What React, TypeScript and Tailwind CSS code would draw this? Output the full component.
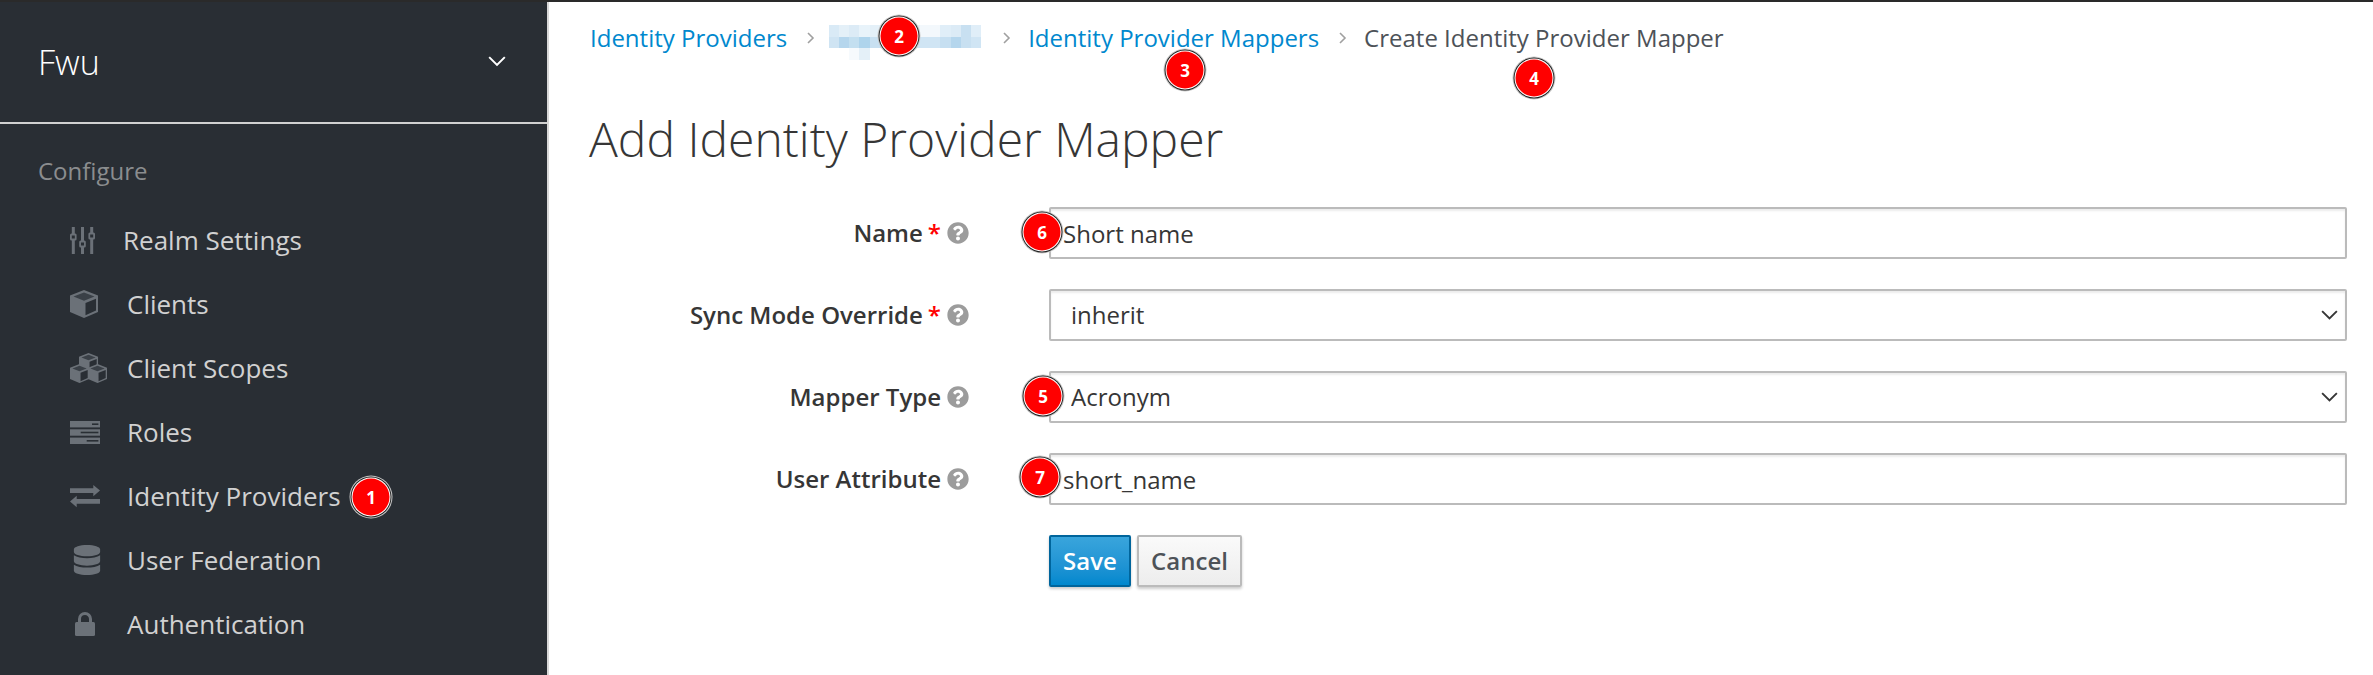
import React from "react";
import { FaDatabase, FaQuestionCircle } from "react-icons/fa";

const ICON = "#6b7178";
const BG = "#292e34";

const Sliders = () => (
  <svg width="25" height="27" viewBox="0 0 25 27" fill={ICON}>
    <rect x="1.800" y="0" width="3" height="27" />
    <rect x="11" y="0" width="3" height="27" />
    <rect x="20.200" y="0" width="3" height="27" />
    <rect x="0" y="6.500" width="6.600" height="7" rx="1.500" />
    <rect x="9.200" y="13.500" width="6.600" height="7" rx="1.500" />
    <rect x="18.400" y="5.500" width="6.600" height="7" rx="1.500" />
    <rect x="1.800" y="8.500" width="3" height="3" fill={BG} />
    <rect x="11" y="15.500" width="3" height="3" fill={BG} />
    <rect x="20.200" y="7.500" width="3" height="3" fill={BG} />
  </svg>
);

const CubeShape = () => (
  <>
    <path d="M14 0L28 5.500V22L14 28 0 22V5.500z" fill={ICON} />
    <path d="M14 2.500L24.500 6.500 14 10.800 3.500 6.500z" fill="#3a4047" />
    <path d="M15.500 13L26 8.700V20.500L15.500 25.300z" fill={BG} />
  </>
);

const Cube = () => (
  <svg width="28" height="28" viewBox="0 0 28 28">
    <CubeShape />
  </svg>
);

const Cubes = () => (
  <svg width="37" height="30" viewBox="0 0 37 30">
    <g transform="translate(9 0) scale(0.68)">
      <CubeShape />
    </g>
    <g transform="translate(0 11) scale(0.68)">
      <CubeShape />
    </g>
    <g transform="translate(18 11) scale(0.68)">
      <CubeShape />
    </g>
  </svg>
);

const Server = () => (
  <svg width="30" height="23" viewBox="0 0 30 23" fill={ICON}>
    <rect x="0" y="0" width="30" height="6.400" />
    <rect x="0" y="8.300" width="30" height="6.400" />
    <rect x="0" y="16.600" width="30" height="6.400" />
    <rect x="22" y="2.400" width="6.400" height="1.600" fill={BG} />
    <rect x="10.700" y="10.700" width="17.700" height="1.600" fill={BG} />
    <rect x="16.700" y="19" width="11.700" height="1.600" fill={BG} />
  </svg>
);

const Exchange = () => (
  <svg width="30" height="23" viewBox="0 0 30 23" fill={ICON}>
    <path d="M0 3.300H23.300V0L30 5.500 23.300 11.300V8H0z" />
    <path d="M30 14H6.700V10.700L0 16.400 6.700 22.300V18.700H30z" />
  </svg>
);

const Lock = () => (
  <svg width="20" height="24" viewBox="0 0 20 24">
    <path d="M4.500 11V7a5.500 5.500 0 0 1 11 0v4" fill="none" stroke={ICON} strokeWidth="3" />
    <rect x="0" y="10" width="20" height="14" rx="1.500" fill={ICON} />
  </svg>
);

const Chevron = ({ color, width }: { color: string; width: number }) => (
  <svg width={width} height={width * 0.62} viewBox="0 0 16 10" fill="none" stroke={color} strokeWidth="1.8">
    <path d="M1 1l7 7 7-7" />
  </svg>
);

const navItems = [
  { label: "Realm Settings", icon: <Sliders />, slot: "w-[53px]" },
  { label: "Clients", icon: <Cube />, slot: "w-[57px]" },
  { label: "Client Scopes", icon: <Cubes />, slot: "w-[57px]" },
  { label: "Roles", icon: <Server />, slot: "w-[57px]" },
  { label: "Identity Providers", icon: <Exchange />, slot: "w-[57px]" },
  { label: "User Federation", icon: <FaDatabase size={30} color={ICON} />, slot: "w-[57px] pl-[2px]" },
  { label: "Authentication", icon: <Lock />, slot: "w-[57px] pl-[5px]" },
];

const Badge = ({ n, pos }: { n: number; pos: string }) => (
  <div
    className={`absolute ${pos} flex h-[37px] w-[37px] -translate-x-1/2 -translate-y-1/2 items-center justify-center rounded-full bg-[#ff0000] text-[17px] font-bold text-white shadow-[0_0_0_1px_#ffffff,0_0_0_2px_#222222,0_0_0_3px_#c8c8c8]`}
  >
    {n}
  </div>
);

const Sep = () => (
  <svg width="8" height="12" viewBox="0 0 8 12" fill="none" stroke="#a0a0a0" strokeWidth="1.6" className="ml-[20px] mr-[17px] shrink-0">
    <path d="M1 1l5 5-5 5" />
  </svg>
);

const pixels: [number, number, string][] = [
  [0, 0, "#d9eaf6"], [1, 0, "#e4f0f8"], [2, 0, "#dcebf6"], [3, 0, "#e8f3fa"], [4, 0, "#e4f0f8"], [5, 0, "#dcebf6"], [6, 0, "#e8f2f9"], [7, 0, "#eef5fb"], [8, 0, "#e8f2f9"], [9, 0, "#f3f8fc"], [10, 0, "#f3f8fc"], [11, 0, "#e0eef8"], [12, 0, "#dcebf6"], [13, 0, "#c8e0f1"], [14, 0, "#e0eef8"],
  [0, 1, "#cfe4f3"], [1, 1, "#b5d6ed"], [2, 1, "#c3dff0"], [3, 1, "#aed4ec"], [4, 1, "#c8e0f1"], [5, 1, "#bddbef"], [6, 1, "#cfe4f3"], [7, 1, "#d5e8f5"], [8, 1, "#cfe4f3"], [9, 1, "#d0e5f4"], [10, 1, "#d0e5f4"], [11, 1, "#c6dff1"], [12, 1, "#b5d6ed"], [13, 1, "#c8e0f1"], [14, 1, "#d0e5f4"],
  [2, 2, "#f6fafd"], [3, 2, "#e4f0f8"],
];

const Blur = () => (
  <svg width="152" height="35" viewBox="0 0 15 3" preserveAspectRatio="none" shapeRendering="crispEdges" className="-ml-[3px] mr-[2px] mt-[8px] shrink-0 self-center">
    {pixels.map(([x, y, c], i) => (
      <rect key={i} x={x} y={y} width="1" height="1" fill={c} />
    ))}
  </svg>
);

const fieldClass =
  "h-[52px] w-full rounded-[2px] border-2 border-[#bbbbbb] bg-white text-[24px] text-[#363636] shadow-[inset_0_2px_2px_rgba(3,3,3,0.08)] outline-none";

const fields = [
  { text: "Name", required: true, value: "Short name", type: "input" },
  { text: "Sync Mode Override", required: true, value: "inherit", type: "select" },
  { text: "Mapper Type", required: false, value: "Acronym", type: "select" },
  { text: "User Attribute", required: false, value: "short_name", type: "input" },
];

export default function App() {
  return (
    <div className="relative h-[675px] w-[2373px] overflow-hidden bg-white font-['Open_Sans',sans-serif]">
      <div className="h-[2px] bg-[#2a2a2a]" />
      <div className="flex h-[673px]">
        <aside className="w-[549px] shrink-0 border-r-2 border-[#d8d8d8] bg-[#292e34]">
          <div className="flex h-[122px] items-center justify-between border-b-2 border-[#d1d1d1] pl-[38px] pr-[41px]">
            <span className="text-[34px] font-light text-white">Fwu</span>
            <Chevron color="#ffffff" width={18} />
          </div>
          <div className="pl-[38px] pt-[29px] text-[24px] text-[#8b8d8f]">Configure</div>
          <nav className="mt-[19px] flex flex-col">
            {navItems.map((it) => (
              <div key={it.label} className="flex h-[64px] items-center pl-[70px] text-[26px] text-[#d1d1d1]">
                <span className={`flex ${it.slot} shrink-0 items-center`}>{it.icon}</span>
                {it.label}
              </div>
            ))}
          </nav>
        </aside>
        <main className="flex-1 pr-[26px]">
          <div className="flex h-[72px] items-center pl-[41px] text-[24px]">
            <a className="text-[#0088ce]">Identity Providers</a>
            <Sep />
            <Blur />
            <Sep />
            <a className="text-[#0088ce]">Identity Provider Mappers</a>
            <Sep />
            <span className="text-[#4d5258]">Create Identity Provider Mapper</span>
          </div>
          <h1 className="mt-[30px] pl-[40px] text-[48px] leading-[70px] font-light text-[#363636]">
            Add Identity Provider Mapper
          </h1>
          <form className="mt-[33px] flex flex-col gap-[30px]">
            {fields.map((f) => (
              <div key={f.text} className="flex items-center gap-[80px]">
                <label className="flex w-[420px] shrink-0 items-center justify-end text-[24px] font-semibold text-[#363636]">
                  <span>{f.text}</span>
                  {f.required && <span className="ml-[5px] text-[#ff0000]">*</span>}
                  <FaQuestionCircle size={22} color="#9c9c9c" className="ml-[6px]" />
                </label>
                {f.type === "input" ? (
                  <input readOnly value={f.value} className={`${fieldClass} px-[12px]`} />
                ) : (
                  <div className="relative w-full">
                    <select className={`${fieldClass} appearance-none px-[20px]`} defaultValue={f.value}>
                      <option>{f.value}</option>
                    </select>
                    <span className="pointer-events-none absolute right-[9px] top-[21px]">
                      <Chevron color="#363636" width={17} />
                    </span>
                  </div>
                )}
              </div>
            ))}
            <div className="ml-[500px] flex gap-[6px] text-[24px] font-semibold">
              <button type="button" className="h-[52px] w-[82px] rounded-[2px] border-2 border-[#00659c] bg-gradient-to-b from-[#39a5dc] to-[#0088ce] text-white shadow-[0_2px_3px_rgba(3,3,3,0.2)]">
                Save
              </button>
              <button type="button" className="h-[52px] w-[105px] rounded-[2px] border-2 border-[#bbbbbb] bg-gradient-to-b from-[#fafafa] to-[#ededed] text-[#4d5258] shadow-[0_2px_3px_rgba(3,3,3,0.2)]">
                Cancel
              </button>
            </div>
          </form>
        </main>
      </div>
      <Badge n={1} pos="left-[371px] top-[497px]" />
      <Badge n={2} pos="left-[899px] top-[36px]" />
      <Badge n={3} pos="left-[1185px] top-[70px]" />
      <Badge n={4} pos="left-[1534px] top-[78px]" />
      <Badge n={5} pos="left-[1043px] top-[396px]" />
      <Badge n={6} pos="left-[1042px] top-[232px]" />
      <Badge n={7} pos="left-[1040px] top-[477px]" />
    </div>
  );
}
